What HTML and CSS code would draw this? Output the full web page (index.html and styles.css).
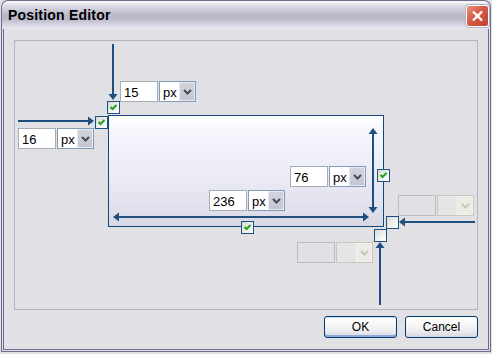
FILE: index.html
```html
<!DOCTYPE html>
<html>
<head>
<meta charset="utf-8">
<title>Position Editor</title>
<link rel="stylesheet" href="styles.css">
</head>
<body>
<div class="window">
  <div class="titlebar">
    <span class="title">Position Editor</span>
    <button class="close" aria-label="Close">
      <svg width="13" height="12" viewBox="0 0 13 12"><path d="M2 1.5 L11 10.5 M11 1.5 L2 10.5" stroke="#fff" stroke-width="2.4" fill="none"/></svg>
    </button>
  </div>
  <div class="body">
    <div class="group">
      <div class="box"></div>
      <svg class="arrows" width="462" height="268" viewBox="0 0 462 268">
        <g fill="#1f4e80">
          <rect x="97" y="3" width="2" height="51"/>
          <polygon points="93.5,53 102.5,53 98,59"/>
          <rect x="3" y="79" width="71" height="2"/>
          <polygon points="73,75.5 73,84.5 79,80"/>
          <rect x="102" y="175" width="248" height="2"/>
          <polygon points="98,176 104,171.5 104,180.5"/>
          <polygon points="354,176 348,171.5 348,180.5"/>
          <rect x="357" y="91" width="2" height="77"/>
          <polygon points="358,87 353.5,93 362.5,93"/>
          <polygon points="358,172 353.5,166 362.5,166"/>
          <rect x="389" y="180" width="71" height="2"/>
          <polygon points="384,181 390,176.5 390,185.5"/>
          <rect x="364" y="206" width="2" height="58"/>
          <polygon points="365,201 360.5,207 369.5,207"/>
        </g>
      </svg>

      <div class="field f-top">
        <input class="num" type="text" value="15">
        <div class="combo"><span class="unit">px</span><span class="drop"><svg width="9" height="6" viewBox="0 0 9 6"><path d="M1 1 L4.5 4.5 L8 1" stroke="#4a4a4a" stroke-width="2" fill="none"/></svg></span></div>
      </div>
      <div class="field f-left">
        <input class="num" type="text" value="16">
        <div class="combo"><span class="unit">px</span><span class="drop"><svg width="9" height="6" viewBox="0 0 9 6"><path d="M1 1 L4.5 4.5 L8 1" stroke="#4a4a4a" stroke-width="2" fill="none"/></svg></span></div>
      </div>
      <div class="field f-height">
        <input class="num" type="text" value="76">
        <div class="combo"><span class="unit">px</span><span class="drop"><svg width="9" height="6" viewBox="0 0 9 6"><path d="M1 1 L4.5 4.5 L8 1" stroke="#4a4a4a" stroke-width="2" fill="none"/></svg></span></div>
      </div>
      <div class="field f-width">
        <input class="num" type="text" value="236">
        <div class="combo"><span class="unit">px</span><span class="drop"><svg width="9" height="6" viewBox="0 0 9 6"><path d="M1 1 L4.5 4.5 L8 1" stroke="#4a4a4a" stroke-width="2" fill="none"/></svg></span></div>
      </div>
      <div class="field f-right disabled">
        <input class="num" type="text" value="" disabled>
        <div class="combo"><span class="unit"></span><span class="drop"><svg width="9" height="6" viewBox="0 0 9 6"><path d="M1 1 L4.5 4.5 L8 1" stroke="#c9c7ba" stroke-width="2" fill="none"/></svg></span></div>
      </div>
      <div class="field f-bottom disabled">
        <input class="num" type="text" value="" disabled>
        <div class="combo"><span class="unit"></span><span class="drop"><svg width="9" height="6" viewBox="0 0 9 6"><path d="M1 1 L4.5 4.5 L8 1" stroke="#c9c7ba" stroke-width="2" fill="none"/></svg></span></div>
      </div>

      <span class="check on c-top"><svg width="11" height="11" viewBox="0 0 11 11"><path d="M2.5 5 L4.5 7 L8.5 3" stroke="#21a121" stroke-width="2" fill="none"/></svg></span>
      <span class="check on c-left"><svg width="11" height="11" viewBox="0 0 11 11"><path d="M2.5 5 L4.5 7 L8.5 3" stroke="#21a121" stroke-width="2" fill="none"/></svg></span>
      <span class="check on c-bottom"><svg width="11" height="11" viewBox="0 0 11 11"><path d="M2.5 5 L4.5 7 L8.5 3" stroke="#21a121" stroke-width="2" fill="none"/></svg></span>
      <span class="check on c-right"><svg width="11" height="11" viewBox="0 0 11 11"><path d="M2.5 5 L4.5 7 L8.5 3" stroke="#21a121" stroke-width="2" fill="none"/></svg></span>
      <span class="check c-r2"></span>
      <span class="check c-b2"></span>
    </div>
    <div class="buttons">
      <button class="btn default">OK</button>
      <button class="btn">Cancel</button>
    </div>
  </div>
</div>
</body>
</html>
```

FILE: styles.css
```css
html, body {
  margin: 0;
  padding: 0;
  background: #e1e0e5;
}

.window {
  width: 490px;
  height: 352px;
  margin-left: 1px;
  display: flex;
  flex-direction: column;
  font-family: "Liberation Sans", Arial, sans-serif;
}

.titlebar {
  box-sizing: border-box;
  height: 29px;
  flex: none;
  border: 1px solid #6f6c8e;
  border-bottom: none;
  border-radius: 7px 7px 0 0;
  background: linear-gradient(to bottom, #fbfbfd 0px, #e6e6ee 3px, #cfcedc 8px, #b8b7ca 15px, #bebdcf 19px, #d9d8e3 24px, #e9e8ef 28px);
  display: flex;
  align-items: center;
  justify-content: space-between;
  padding: 0 1px 1px 6px;
}

.title {
  font-weight: bold;
  font-size: 14px;
  color: #000;
  letter-spacing: 0.2px;
  padding-top: 1px;
}

.close {
  box-sizing: border-box;
  width: 23px;
  height: 22px;
  margin-top: 2px;
  padding: 0;
  border: 1px solid #ffffff;
  border-radius: 3px;
  background: linear-gradient(135deg, #e98f7c 0%, #d55c45 45%, #c2412b 100%);
  box-shadow: 0 0 0 1px #b4b3c6;
  display: flex;
  align-items: center;
  justify-content: center;
}

.body {
  flex: 1;
  box-sizing: border-box;
  border: 3px double #6f6c8e;
  border-top: none;
  background: #e1e0e5;
  padding: 11px 10px 0 10px;
  display: flex;
  flex-direction: column;
}

.group {
  position: relative;
  box-sizing: border-box;
  height: 270px;
  border: 1px solid #b5b3b9;
}

.box {
  position: absolute;
  left: 93px;
  top: 74px;
  width: 276px;
  height: 112px;
  box-sizing: border-box;
  border: 1px solid #15467a;
  background: linear-gradient(to bottom, #ffffff 0%, #f7f7fd 12%, #f1f1fa 30%, #ebebf6 55%, #e2e2ee 82%, #d6d6e4 100%);
}

.arrows {
  position: absolute;
  left: 0;
  top: 0;
}

.field {
  position: absolute;
  display: flex;
  gap: 1px;
  height: 21px;
}

.f-top { left: 105px; top: 40px; }
.f-left { left: 3px; top: 87px; }
.f-height { left: 275px; top: 125px; }
.f-width { left: 194px; top: 149px; }
.f-right { left: 383px; top: 154px; }
.f-bottom { left: 282px; top: 201px; }

.num {
  box-sizing: border-box;
  width: 38px;
  height: 21px;
  margin: 0;
  border: 1px solid #a5acb5;
  background: #fff;
  padding: 1px 2px 0 3px;
  font-family: "Liberation Sans", Arial, sans-serif;
  font-size: 13px;
  color: #000;
  outline: none;
}

.combo {
  box-sizing: border-box;
  width: 37px;
  height: 21px;
  border: 1px solid #7f9db9;
  background: #fff;
  display: flex;
  align-items: stretch;
  justify-content: space-between;
  font-size: 13px;
}

.unit {
  padding-left: 3px;
  line-height: 19px;
  padding-top: 1px;
}

.drop {
  box-sizing: border-box;
  width: 16px;
  border: 1px solid #e9e9ef;
  background: linear-gradient(to bottom, #d2d3de, #c4c5d3);
  display: flex;
  align-items: center;
  justify-content: center;
}

.disabled .num {
  border-color: #bdbcc0;
  background: #e1e0e5;
}

.disabled .combo {
  border-color: #c9c7ba;
  background: #e6e5e6;
}

.disabled .drop {
  border-color: #f2f2ee;
  background: #ecebe6;
}

.check {
  position: absolute;
  box-sizing: border-box;
  width: 13px;
  height: 13px;
  border: 1px solid #1c5180;
  background: linear-gradient(135deg, #d8d8d2 0%, #f2f2ef 60%, #ffffff 100%);
  display: flex;
  align-items: center;
  justify-content: center;
}

.c-top { left: 92px; top: 60px; }
.c-left { left: 80px; top: 75px; }
.c-bottom { left: 226px; top: 180px; }
.c-right { left: 362px; top: 128px; }
.c-r2 { left: 371px; top: 175px; }
.c-b2 { left: 359px; top: 188px; }

.buttons {
  display: flex;
  justify-content: flex-end;
  gap: 8px;
  margin-top: 6px;
}

.btn {
  box-sizing: border-box;
  width: 73px;
  height: 22px;
  margin: 0;
  padding: 0;
  border: 1px solid #003c74;
  border-radius: 3px;
  background: linear-gradient(to bottom, #ffffff 0%, #f6f6f8 40%, #e9e9ee 75%, #d7d6e0 100%);
  font-family: "Liberation Sans", Arial, sans-serif;
  font-size: 12px;
  color: #000;
}

.btn.default {
  box-shadow: inset 0 -2px 0 #8fa8d8, inset 0 1px 0 #cfdcf5;
}
```
